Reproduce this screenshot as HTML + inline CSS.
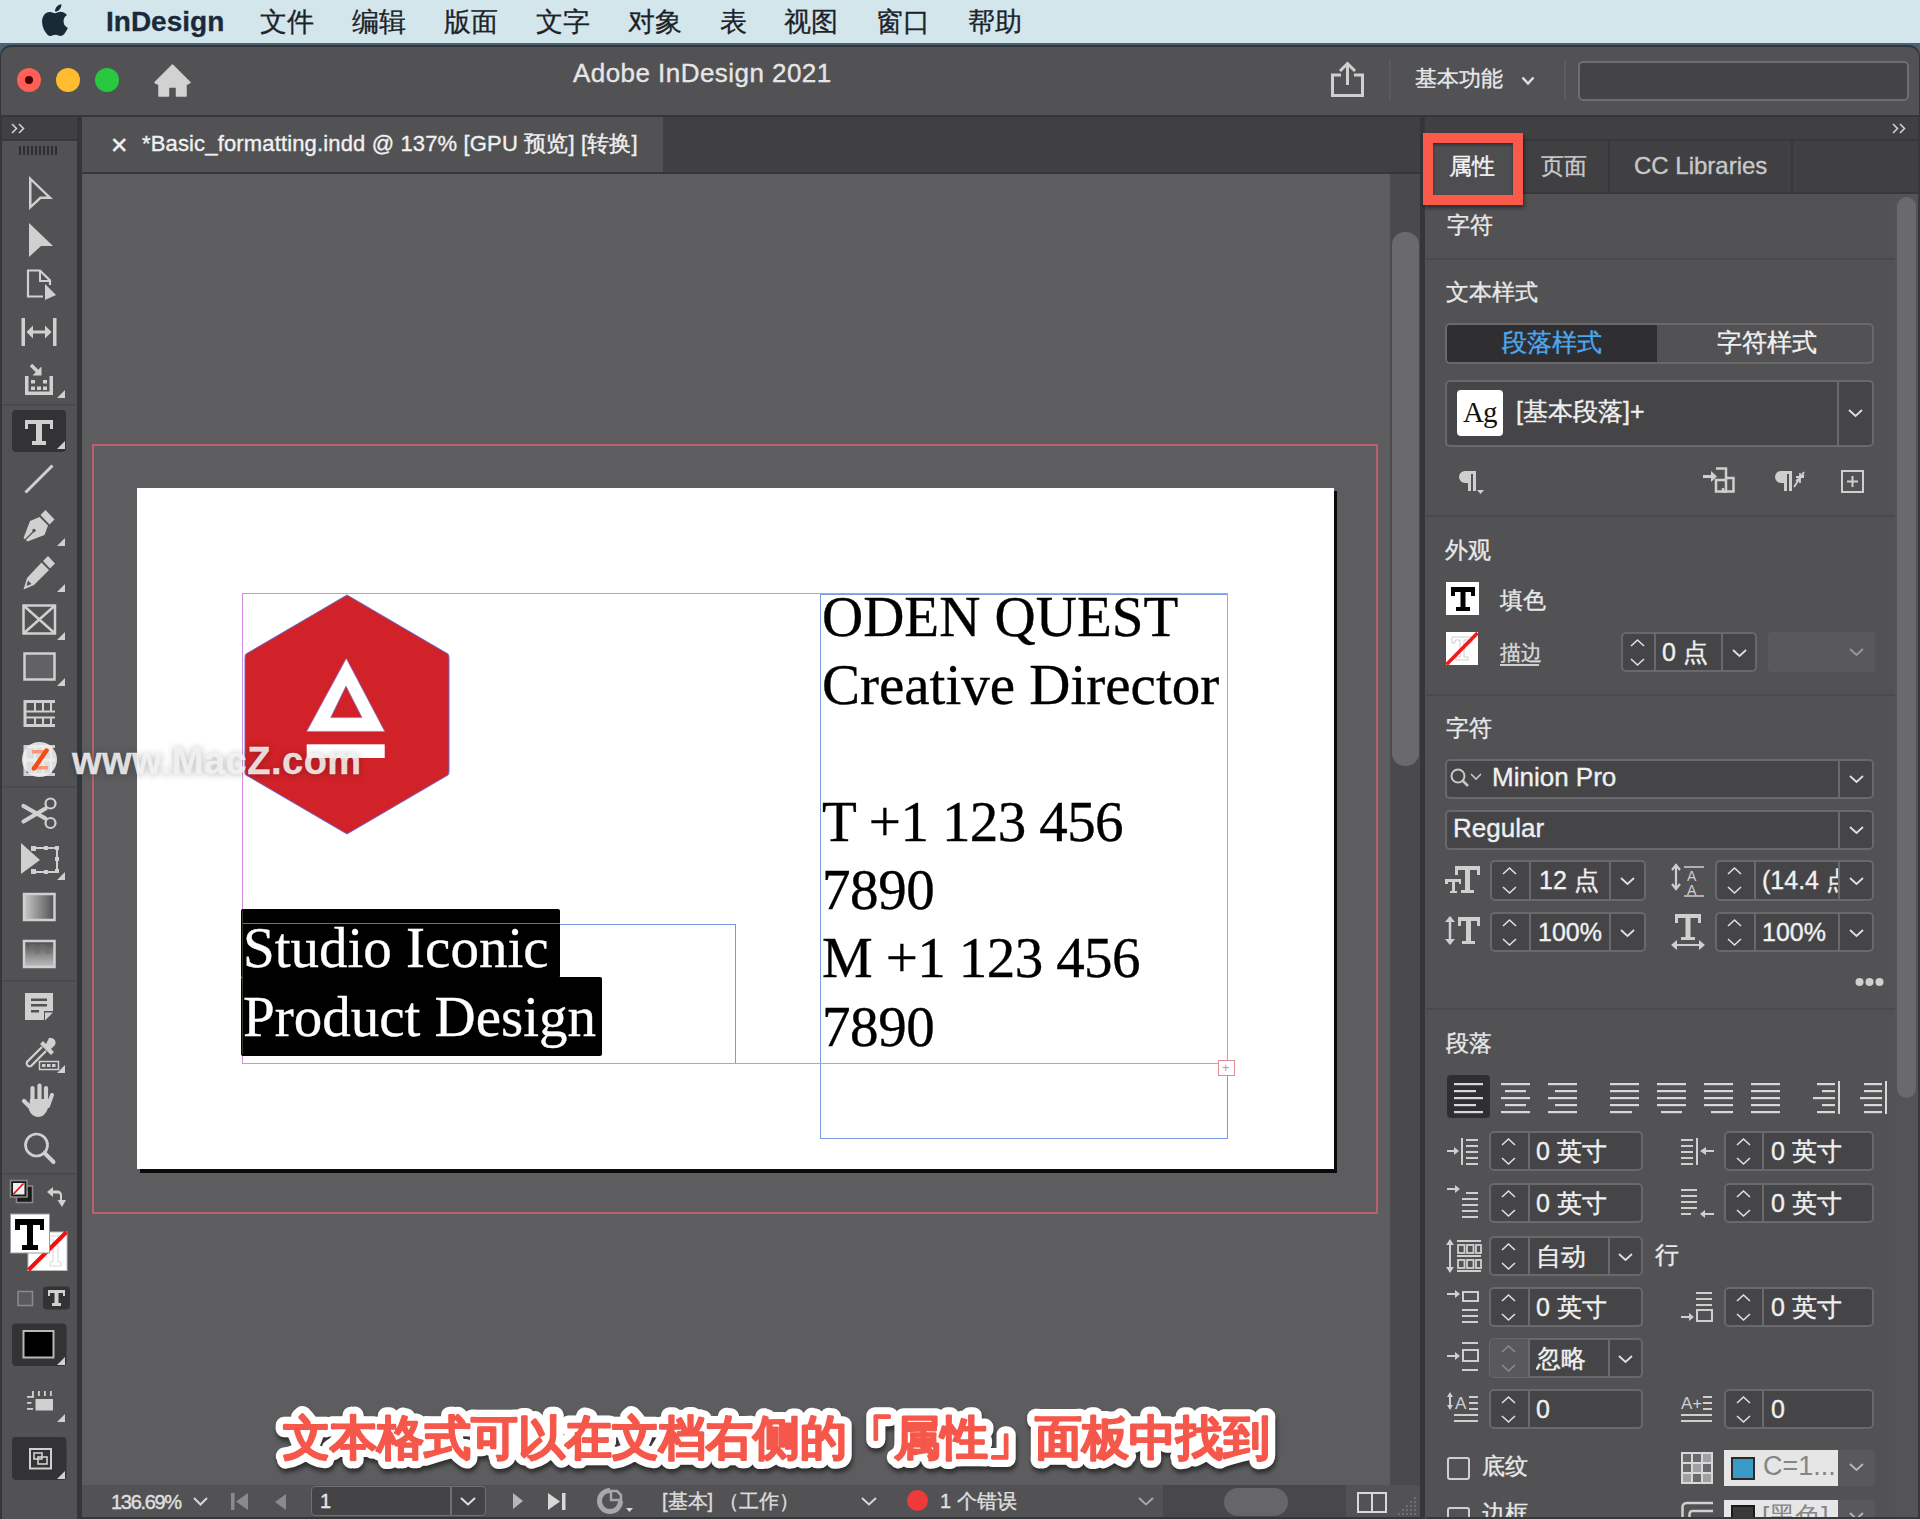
<!DOCTYPE html>
<html><head><meta charset="utf-8">
<style>
*{margin:0;padding:0;box-sizing:border-box}
html,body{width:1920px;height:1519px;overflow:hidden;background:#3a3a3c;font-family:"Liberation Sans",sans-serif;position:relative}
.a{position:absolute}
.t{position:absolute;white-space:nowrap;color:#e8e8e8;line-height:1;-webkit-text-stroke:0.35px currentColor}
svg{position:absolute;overflow:visible}
#menubar{left:0;top:0;width:1920px;height:43px;background:#d3e6ec}
.mi{position:absolute;top:5px;font-size:27px;color:#1c2328;line-height:34px;-webkit-text-stroke:0.3px currentColor}
#win{left:0;top:45px;width:1920px;height:1474px;background:#35363a;border-radius:11px 11px 0 0}
#titlebar{left:1px;top:47px;width:1918px;height:68px;background:#525254;border-radius:10px 10px 0 0}
.tl{position:absolute;width:24px;height:24px;border-radius:50%;top:68px}
</style></head>
<body>
<!-- MENU BAR -->
<div id="menubar" class="a">
  <svg style="left:39px;top:4px" width="30" height="32" viewBox="0 0 30 32"><path fill="#172a36" d="M24.6 17c0-4 3.3-5.9 3.4-6-1.9-2.7-4.8-3.1-5.800-3.100-2.500-.3-4.800 1.400-6.100 1.400-1.300 0-3.200-1.400-5.200-1.300C8.200 8 5.800 9.600 4.400 12c-2.800 4.900-.7 12.100 2 16 1.300 1.900 2.900 4.100 5 4 2-.1 2.800-1.300 5.200-1.300s3.100 1.300 5.200 1.300c2.200 0 3.500-2 4.800-3.900 1.500-2.200 2.100-4.300 2.200-4.400-.1-.1-4.200-1.600-4.200-6.300zM20.700 5.300c1.100-1.400 1.900-3.200 1.700-5.100-1.600.1-3.600 1.100-4.700 2.500-1 1.200-1.900 3.100-1.700 4.900 1.800.2 3.600-.9 4.700-2.300z"/></svg>
  <div class="mi" style="left:106px;font-weight:bold;color:#1a2a3a;font-size:28px">InDesign</div>
  <div class="mi" style="left:260px">文件</div>
  <div class="mi" style="left:352px">编辑</div>
  <div class="mi" style="left:444px">版面</div>
  <div class="mi" style="left:536px">文字</div>
  <div class="mi" style="left:628px">对象</div>
  <div class="mi" style="left:720px">表</div>
  <div class="mi" style="left:784px">视图</div>
  <div class="mi" style="left:876px">窗口</div>
  <div class="mi" style="left:968px">帮助</div>
</div>
<div class="a" style="left:0;top:43px;width:1920px;height:14px;background:#4b6274"></div>
<div id="win" class="a"></div>
<!-- TITLE BAR -->
<div id="titlebar" class="a"></div>
<div class="tl" style="left:17px;background:#fe5f57"><div class="a" style="left:8px;top:8px;width:8px;height:8px;border-radius:50%;background:#4a0002"></div></div>
<div class="tl" style="left:56px;background:#febc2e"></div>
<div class="tl" style="left:95px;background:#28c840"></div>
<svg style="left:155px;top:65px" width="35" height="32" viewBox="0 0 35 32"><path fill="#d2d2d2" d="M17.5 0 L35 17.5 L31 19.5 L31 31 L21.500 31 L21.500 22 L13.500 22 L13.500 31 L4 31 L4 19.500 L0 17.500 Z" stroke="#d2d2d2" stroke-width="1.500" stroke-linejoin="round"/></svg>
<div class="t" style="left:573px;top:60px;font-size:26px;color:#e6e6e6;letter-spacing:0.450px">Adobe InDesign 2021</div>
<svg style="left:1331px;top:62px" width="33" height="35" viewBox="0 0 33 35"><path fill="none" stroke="#d0d0d0" stroke-width="3" d="M10 13 H1.5 V33.500 H31.500 V13 H23 M16.500 23 V2 M9 9 L16.500 1.500 L24 9"/></svg>
<div class="a" style="left:1389px;top:60px;width:2px;height:40px;background:#5c5c5e"></div>
<div class="t" style="left:1415px;top:68px;font-size:22px;color:#e8e8e8">基本功能</div>
<svg style="left:1521px;top:76px" width="14" height="10" viewBox="0 0 14 10"><path fill="none" stroke="#e0e0e0" stroke-width="2.500" d="M1.500 1.500 L7 7.500 L12.500 1.500"/></svg>
<div class="a" style="left:1564px;top:60px;width:2px;height:40px;background:#5c5c5e"></div>
<div class="a" style="left:1578px;top:61px;width:331px;height:40px;background:#444446;border:2px solid #6e6e70;border-radius:5px"></div>

<!-- TOOL COLUMN -->
<div class="a" style="left:2px;top:117px;width:75px;height:22px;background:#404042"></div>
<div class="a" style="left:2px;top:141px;width:75px;height:1378px;background:#525254"></div>
<!-- TOOL ICONS -->
<svg style="left:11px;top:123px" width="14" height="11" viewBox="0 0 14 11"><path fill="none" stroke="#d0d0d0" stroke-width="1.600" d="M1 1 L5.500 5.500 L1 10 M8 1 L12.500 5.500 L8 10"/></svg>
<div class="a" style="left:2px;top:139px;width:75px;height:2px;background:#38383a"></div>
<svg style="left:19px;top:146px" width="39" height="9" viewBox="0 0 39 9"><g fill="#2e2e30"><rect x="0" y="0" width="2" height="9"/><rect x="4" y="0" width="2" height="9"/><rect x="8" y="0" width="2" height="9"/><rect x="12" y="0" width="2" height="9"/><rect x="16" y="0" width="2" height="9"/><rect x="20" y="0" width="2" height="9"/><rect x="24" y="0" width="2" height="9"/><rect x="28" y="0" width="2" height="9"/><rect x="32" y="0" width="2" height="9"/><rect x="36" y="0" width="2" height="9"/></g></svg>
<svg class="tool" style="left:0;top:160px" width="77" height="1330" viewBox="0 160 77 1330">
 <g fill="#d0d0d0" stroke="none">
  <!-- selection -->
  <path d="M29 176 L53 199 L41 199 L29 210 Z M31.500 181.500 V204.500 L40 196.500 H47 Z" fill-rule="evenodd"/>
  <!-- direct selection -->
  <path d="M29 223 L53 246 L41 246 L29 257 Z"/>
  <!-- page tool -->
  <path d="M43 296.500 H28 V270.500 H40 L50 280.500 V285" fill="none" stroke="#d0d0d0" stroke-width="2.200"/>
  <path d="M40 271 V281 H50" fill="none" stroke="#d0d0d0" stroke-width="2"/>
  <path d="M45 284 L56 295 L45 300 Z"/>
  <!-- gap tool -->
  <rect x="21.500" y="318" width="3.500" height="28"/><rect x="53" y="318" width="3.500" height="28"/>
  <path d="M26.500 332 L33 325.500 V330.500 H45 V325.500 L51.500 332 L45 338.500 V333.500 H33 V338.500 Z"/>
  <!-- content collector -->
  <path d="M25 376 H28.500 V391.500 H49.500 V376 H53 V395 H25 Z"/>
  <rect x="31" y="380" width="4" height="3.500"/><rect x="43" y="380" width="4" height="3.500"/>
  <rect x="31" y="386.500" width="4" height="3.500"/><rect x="37" y="386.500" width="4" height="3.500"/><rect x="43" y="386.500" width="4" height="3.500"/>
  <path d="M31 365 L38 372" stroke="#d0d0d0" stroke-width="3.500" fill="none"/>
  <path d="M32.500 375.500 H41.500 V366.500 Z"/>
  <path d="M57 398 L65 390 V398 Z"/>
 </g>
 <rect x="2" y="404" width="75" height="1.500" fill="#48484a"/>
 <rect x="12" y="410" width="54" height="42" rx="4" fill="#333335"/>
 <g fill="#d0d0d0">
  <!-- Type T slab -->
  <path d="M25 420 H53 V429 H50 V424 H42 V441 H46 V445 H32 V441 H36 V424 H28 V429 H25 Z"/>
  <path d="M57 449 L65 441 V449 Z"/>
  <!-- line -->
  <path d="M25.500 492.500 L52.500 465.500" stroke="#d0d0d0" stroke-width="3" fill="none"/>
  <!-- pen -->
  <path d="M40.500 515 L45.500 510 L54.500 519.500 L49.500 524.500 Z"/>
  <path d="M39.500 517 L48 525.500 L44.500 535 L27.500 541.500 L23.500 538 L30 521 Z"/>
  <path d="M25 540 L34 531" stroke="#525254" stroke-width="1.300"/>
  <circle cx="34" cy="530.500" r="1.700" fill="#525254"/>
  <path d="M57 546 L65 538 V546 Z"/>
  <!-- pencil -->
  <path d="M43 561 L48 556 L55 563.500 L50 568.500 Z"/>
  <path d="M41.500 562.500 L49 570 L34 585 L23.500 589.500 L27 578 Z M26.500 586 L28 580.500 L31.500 584 Z" fill-rule="evenodd"/>
  <path d="M57 592 L65 584 V592 Z"/>
  <!-- rect frame -->
  <path d="M23.500 605.500 H55 V633.500 H23.500 Z M23.500 605.500 L55 633.500 M55 605.500 L23.500 633.500" fill="none" stroke="#d0d0d0" stroke-width="2.500"/>
  <path d="M57 640 L65 632 V640 Z"/>
  <!-- rect -->
  <rect x="24.500" y="653.500" width="30" height="26" fill="#626264" stroke="#d0d0d0" stroke-width="2.500"/>
  <path d="M57 686 L65 678 V686 Z"/>
  <!-- table -->
  <path d="M25 700 V727 M23.500 701.500 H55 M23.500 725.500 H55" fill="none" stroke="#d0d0d0" stroke-width="3"/>
  <path d="M26 711.500 H55 M26 717.500 H55" fill="none" stroke="#d0d0d0" stroke-width="1.800"/>
  <path d="M35 703 V711 M43 703 V711 M51 703 V711 M35 718 V725 M43 718 V725 M51 718 V725" fill="none" stroke="#d0d0d0" stroke-width="2"/>
  <path d="M25 745 V776 M23.500 746.500 H55 M23.500 774.500 H55 M26 760 H55" fill="none" stroke="#d0d0d0" stroke-width="3"/>
  <path d="M35 748 V774 M43 748 V774 M51 748 V774" fill="none" stroke="#d0d0d0" stroke-width="2"/>
 </g>
 <rect x="2" y="786" width="75" height="1.500" fill="#48484a"/>
 <g fill="#d0d0d0">
  <!-- scissors -->
  <circle cx="50.500" cy="803.500" r="5" fill="none" stroke="#d0d0d0" stroke-width="2.200"/>
  <circle cx="50.500" cy="823" r="5" fill="none" stroke="#d0d0d0" stroke-width="2.200"/>
  <path d="M23.500 806 L45.500 818.500 M23.500 821.500 L45.500 808.500" stroke="#d0d0d0" stroke-width="4.300" stroke-linecap="round" fill="none"/>
  <!-- free transform -->
  <path d="M21 843 L40 860 L21 874 Z"/>
  <path d="M33 848 H57 V872 H33" fill="none" stroke="#d0d0d0" stroke-width="2"/>
  <rect x="31" y="846" width="5" height="5"/><rect x="44" y="846" width="4" height="4"/><rect x="55" y="846" width="4" height="4"/>
  <rect x="55" y="857" width="4" height="4"/><rect x="55" y="869" width="4" height="4"/><rect x="44" y="870" width="4" height="4"/><rect x="31" y="869" width="5" height="5"/>
  <path d="M57 880 L65 872 V880 Z"/>
 </g>
 <defs>
  <linearGradient id="gr1" x1="0" x2="1"><stop offset="0" stop-color="#c8c8c8"/><stop offset="1" stop-color="#505052"/></linearGradient>
  <linearGradient id="gr2" x1="0" y1="0" x2="0" y2="1"><stop offset="0" stop-color="#4c4c4e"/><stop offset="1" stop-color="#c0c0c0"/></linearGradient>
 </defs>
 <rect x="24" y="894" width="30.500" height="26" fill="url(#gr1)" stroke="#d0d0d0" stroke-width="2.500"/>
 <rect x="24" y="941" width="30.500" height="26" fill="url(#gr2)" stroke="#d0d0d0" stroke-width="2.500"/>
 <g fill="#6e6e70" opacity="0.6"><rect x="30" y="944" width="5" height="5"/><rect x="40" y="944" width="5" height="5"/><rect x="35" y="949" width="5" height="5"/><rect x="45" y="949" width="5" height="5"/></g>
 <rect x="2" y="980" width="75" height="1.500" fill="#48484a"/>
 <g fill="#d0d0d0">
  <!-- note -->
  <path d="M25 993 H53 V1011 H44 V1020 H25 Z"/>
  <path d="M45 1012.500 H53 L45 1020.500 Z"/>
  <rect x="31" y="998.500" width="16" height="2.500" fill="#525254"/><rect x="31" y="1004" width="16" height="2.500" fill="#525254"/><rect x="31" y="1010" width="8" height="2.500" fill="#525254"/>
  <!-- eyedropper -->
  <path d="M49 1038 a5 5 0 0 1 6 7 L51 1049 L54 1052 L51 1055 L40 1044 L43 1041 L46 1044 Z"/>
  <path d="M42 1047 L27 1062 a3 3 0 0 0 4 4 L46 1051" fill="none" stroke="#d0d0d0" stroke-width="2.200"/>
  <rect x="39.500" y="1061.500" width="19" height="8" fill="none" stroke="#d0d0d0" stroke-width="1.500"/>
  <rect x="42" y="1064" width="3.500" height="3"/><rect x="47" y="1064" width="3.500" height="3"/><rect x="52" y="1064" width="3.500" height="3"/>
  <path d="M57 1073 L65 1065 V1073 Z"/>
  <!-- hand -->
  <g stroke="#d0d0d0" stroke-linecap="round" fill="none">
   <path d="M32.500 1088 V1103" stroke-width="4.200"/>
   <path d="M39.500 1085.500 V1102" stroke-width="4.200"/>
   <path d="M46 1088 V1103" stroke-width="4.200"/>
   <path d="M52 1095 L48 1106" stroke-width="4"/>
   <path d="M24 1101 L31 1108" stroke-width="4.200"/>
  </g>
  <path d="M30 1099 H50 L48 1108 Q45 1117 38 1117 Q32 1117 29 1110 Z"/>
  <!-- zoom -->
  <circle cx="36.500" cy="1145" r="11" fill="none" stroke="#d0d0d0" stroke-width="2.700"/>
  <path d="M44.500 1153 L53.500 1162" stroke="#d0d0d0" stroke-width="4" stroke-linecap="round"/>
 </g>
 <rect x="2" y="1173" width="75" height="1.500" fill="#48484a"/>
 <!-- small fill/stroke -->
 <rect x="16.500" y="1186" width="16" height="16.500" fill="#1a1a1a" stroke="#8a8a8c" stroke-width="1.500"/>
 <path d="M22 1196 H27 V1191" fill="none" stroke="#dcdcdc" stroke-width="1.200"/>
 <rect x="10.500" y="1180.500" width="16.500" height="16.500" fill="#1a1a1a" stroke="#8a8a8c" stroke-width="1.500"/>
 <rect x="13" y="1183" width="11.500" height="11.500" fill="#eeeeee"/>
 <path d="M13.500 1194 L23.500 1183.500" stroke="#ee1111" stroke-width="1.800"/>
 <path d="M47 1192 L53 1187 V1190.500 H57.500 a4.500 4.500 0 0 1 4.500 4.500 V1200 H66 L62 1207 L57.500 1200 H60 V1195.500 a2 2 0 0 0 -2 -2 H53 V1197 Z" fill="#d0d0d0"/>
 <!-- big stroke box -->
 <rect x="28" y="1232" width="39" height="38.500" fill="#ffffff" stroke="#bbbbbb" stroke-width="1"/>
 <path d="M46 1236 H62 V1240 H58 V1262 H61 V1266 H50 V1262 H53 V1240 H46" fill="none" stroke="#d8d8d8" stroke-width="1"/>
 <path d="M28.500 1270 L66.500 1232" stroke="#ee1111" stroke-width="4"/>
 <!-- big fill T -->
 <rect x="10.500" y="1214" width="39" height="39" fill="#ffffff" stroke="#9a9a9a" stroke-width="1"/>
 <path d="M15 1219 H44 V1230 H40 V1225 H33 V1245 H38 V1250 H22 V1245 H27 V1225 H20 V1230 H15 Z" fill="#000"/>
 <!-- container/text -->
 <rect x="18" y="1291.500" width="14.500" height="14" fill="#5a5a5c" stroke="#8a8a8c" stroke-width="1.500"/>
 <rect x="43" y="1286.500" width="27" height="23" rx="4" fill="#333335"/>
 <path d="M48 1290 H65 V1296 H63 V1293 H58.500 V1303 H61 V1306 H52 V1303 H54.500 V1293 H50 V1296 H48 Z" fill="#d0d0d0"/>
 <!-- black square button -->
 <rect x="12" y="1323.500" width="54.500" height="42.500" rx="4" fill="#333335"/>
 <rect x="23.500" y="1331" width="30" height="26.500" fill="#000" stroke="#b8b8b8" stroke-width="2"/>
 <path d="M57 1365 L65 1357 V1365 Z" fill="#d0d0d0"/>
 <!-- screen mode -->
 <g fill="#d0d0d0">
  <rect x="35.500" y="1399" width="17.500" height="11.500"/>
  <rect x="38" y="1391" width="1.800" height="5"/><rect x="44" y="1391" width="1.800" height="5"/><rect x="50" y="1391" width="1.800" height="5"/>
  <rect x="27" y="1396" width="7" height="1.800"/><rect x="32" y="1391" width="1.800" height="6.500"/>
  <rect x="27" y="1402" width="4.500" height="1.800"/><rect x="27" y="1408" width="6" height="1.800"/>
  <path d="M57 1422 L65 1414 V1422 Z"/>
 </g>
 <!-- last button -->
 <rect x="12" y="1437" width="54.500" height="43" rx="4" fill="#333335"/>
 <rect x="30" y="1449" width="21" height="19.500" fill="none" stroke="#d0d0d0" stroke-width="2"/>
 <rect x="34" y="1453" width="8" height="6" fill="none" stroke="#d0d0d0" stroke-width="1.600"/>
 <rect x="38" y="1457" width="9" height="7" fill="none" stroke="#d0d0d0" stroke-width="1.600"/>
 <path d="M57 1479 L65 1471 V1479 Z" fill="#d0d0d0"/>
</svg>
<!-- TAB BAR -->
<div class="a" style="left:82px;top:117px;width:1338px;height:55px;background:#404042"></div>
<div class="a" style="left:82px;top:117px;width:581px;height:55px;background:#525254"></div>
<div class="t" style="left:110px;top:135px;font-size:22px;color:#f0f0f0">✕</div>
<div class="t" style="left:142px;top:133px;font-size:22px;color:#f0f0f0;letter-spacing:0.150px">*Basic_formatting.indd @ 137% [GPU 预览] [转换]</div>
<!-- CANVAS -->
<div id="canvas" class="a" style="left:82px;top:174px;width:1308px;height:1311px;background:#5d5d5f;overflow:hidden"></div>
<div class="a" style="left:1390px;top:174px;width:30px;height:1311px;background:#4a4a4c"></div>
<div class="a" style="left:1392px;top:232px;width:27px;height:534px;background:#6a6a6c;border-radius:13px"></div>
<!-- CANVAS CONTENT -->
<div class="a" style="left:92px;top:444px;width:1286px;height:770px;border:2px solid #b8606e"></div>
<div class="a" style="left:140px;top:491px;width:1197px;height:682px;background:#0a0a0a"></div>
<div class="a" style="left:137px;top:488px;width:1197px;height:681px;background:#ffffff"></div>
<!-- right text frame -->
<div class="a" style="left:820px;top:594px;width:408px;height:545px;border:1px solid #7a9ce0"></div>
<!-- left frame -->
<div class="a" style="left:242px;top:924px;width:494px;height:140px;border:1px solid #7a9ce0"></div>
<!-- margin guides -->
<div class="a" style="left:242px;top:593px;width:986px;height:471px;border:1.500px solid #d48ce0"></div>
<div class="a" style="left:241px;top:909px;width:319px;height:69px;background:#000;border-radius:2px"></div>
<div class="a" style="left:241px;top:977px;width:361px;height:79px;background:#000;border-radius:2px"></div>
<div class="a" style="left:242px;top:923px;width:318px;height:1px;background:#8a6a40"></div>
<div class="a" style="left:242px;top:911px;width:1px;height:143px;background:#3a3a20"></div>
<div class="a" style="left:1218px;top:1060px;width:17px;height:16px;border:1px solid #e08a9a;background:#fff"></div>
<div class="t" style="left:1222px;top:1061px;font-size:13px;color:#e08a9a;-webkit-text-stroke:0">+</div>
<!-- hexagon logo -->
<svg style="left:244px;top:594px" width="206" height="241" viewBox="0 0 206 241">
 <path d="M103 1 L204 60 Q205 61 205 64 L205 177 Q205 180 204 181 L103 240 L2 181 Q1 180 1 177 L1 64 Q1 61 2 60 Z" fill="#d02228" stroke="#6a6ad0" stroke-width="1"/>
 <path d="M102.300 64.500 L140.700 137.400 L62.700 137.400 Z M102 92 L86.700 123.600 L118 123.600 Z" fill="#fff" fill-rule="evenodd" stroke="#8080e0" stroke-width="0.700"/>
 <rect x="62.700" y="150.300" width="78" height="13.700" fill="#fff"/>
</svg>
<!-- text -->
<div class="t" id="oden" style="left:822px;top:583px;font-family:'Liberation Serif',serif;font-size:57px;color:#000;line-height:68.3px">ODEN QUEST<br>Creative Director<br><br><span style="letter-spacing:-0.600px">T +1 123 456</span><br><span style="letter-spacing:-0.400px">7890</span><br><span style="letter-spacing:-0.600px">M +1 123 456</span><br><span style="letter-spacing:-0.400px">7890</span></div>
<div class="t" id="studio" style="left:243px;top:913px;font-family:'Liberation Serif',serif;font-size:57px;color:#fff;line-height:69px">Studio Iconic<br>Product Design</div>
<!-- STATUS BAR -->
<div id="status" class="a" style="left:82px;top:1485px;width:1338px;height:32px;background:#525254"></div>
<!-- STATUS CONTENT -->
<div class="t" style="left:111px;top:1492px;font-size:20px;color:#e0e0e0;letter-spacing:-1.300px">136.69%</div>
<svg style="left:193px;top:1497px" width="15" height="9" viewBox="0 0 15 9"><path d="M1 1 L7.500 7.500 L14 1" fill="none" stroke="#d8d8d8" stroke-width="2"/></svg>
<svg style="left:231px;top:1493px" width="18" height="17" viewBox="0 0 18 17"><rect x="0" y="0" width="3.500" height="17" fill="#8a8a8c"/><path d="M17 0 V17 L5 8.500 Z" fill="#8a8a8c"/></svg>
<svg style="left:275px;top:1494px" width="11" height="16" viewBox="0 0 11 16"><path d="M11 0 V16 L0 8 Z" fill="#8a8a8c"/></svg>
<div class="a" style="left:311px;top:1486px;width:175px;height:30px;background:#444446;border:1.500px solid #707072;border-radius:4px"></div>
<div class="a" style="left:450px;top:1487px;width:1.500px;height:28px;background:#707072"></div>
<div class="t" style="left:320px;top:1491px;font-size:20px;color:#e8e8e8">1</div>
<svg style="left:460px;top:1497px" width="16" height="9" viewBox="0 0 16 9"><path d="M1 1 L8 7.500 L15 1" fill="none" stroke="#e0e0e0" stroke-width="2"/></svg>
<svg style="left:513px;top:1493px" width="10" height="16" viewBox="0 0 10 16"><path d="M0 0 V16 L10 8 Z" fill="#b8b8b8"/></svg>
<svg style="left:548px;top:1493px" width="18" height="17" viewBox="0 0 18 17"><path d="M0 0 V17 L12 8.500 Z" fill="#d8d8d8"/><rect x="14" y="0" width="3.500" height="17" fill="#d8d8d8"/></svg>
<svg style="left:598px;top:1489px" width="36" height="25" viewBox="0 0 36 25"><path d="M12 1.500 a10.500 10.500 0 1 0 10.500 10.500" fill="none" stroke="#a8a8aa" stroke-width="5"/><path d="M13 2 H19 L23 6 V11 H13 Z" fill="none" stroke="#a8a8aa" stroke-width="2.500"/><path d="M28 19 H35 L31.500 23 Z" fill="#d8d8d8"/></svg>
<div class="t" style="left:662px;top:1491px;font-size:20px;color:#dcdcdc">[基本]  （工作）</div>
<svg style="left:861px;top:1497px" width="16" height="9" viewBox="0 0 16 9"><path d="M1 1 L8 7.500 L15 1" fill="none" stroke="#d8d8d8" stroke-width="2"/></svg>
<div class="a" style="left:907px;top:1490px;width:21px;height:21px;border-radius:50%;background:#ee3a3a"></div>
<div class="t" style="left:940px;top:1491px;font-size:20px;color:#e0e0e0">1 个错误</div>
<svg style="left:1138px;top:1497px" width="16" height="9" viewBox="0 0 16 9"><path d="M1 1 L8 7.500 L15 1" fill="none" stroke="#a8a8a8" stroke-width="2"/></svg>
<div class="a" style="left:1163px;top:1485px;width:183px;height:32px;background:#48484a"></div>
<div class="a" style="left:1224px;top:1488px;width:64px;height:28px;background:#666668;border-radius:14px"></div>
<svg style="left:1357px;top:1492px" width="30" height="21" viewBox="0 0 30 21"><path d="M1 1 H29 V20 H1 Z M15 1 V20" fill="none" stroke="#d8d8d8" stroke-width="2"/></svg>
<svg style="left:1398px;top:1495px" width="20" height="20" viewBox="0 0 20 20"><g fill="#7a7a7c"><circle cx="17" cy="3" r="1"/><circle cx="17" cy="7" r="1"/><circle cx="13" cy="7" r="1"/><circle cx="17" cy="11" r="1"/><circle cx="13" cy="11" r="1"/><circle cx="9" cy="11" r="1"/><circle cx="17" cy="15" r="1"/><circle cx="13" cy="15" r="1"/><circle cx="9" cy="15" r="1"/><circle cx="5" cy="15" r="1"/><circle cx="17" cy="19" r="1"/><circle cx="13" cy="19" r="1"/><circle cx="9" cy="19" r="1"/><circle cx="5" cy="19" r="1"/><circle cx="1" cy="19" r="1"/></g></svg>
<!-- watermark -->
<div class="a" style="left:22px;top:742px;width:35px;height:35px;border-radius:50%;background:rgba(240,240,240,0.88)"></div>
<svg style="left:31px;top:749px" width="18" height="21" viewBox="0 0 18 21"><rect x="1" y="1" width="15" height="3.500" fill="#f59a78"/><rect x="1" y="17" width="16" height="3.500" fill="#f59a78"/><path d="M15.500 1.500 L3 19.500" stroke="#f24d18" stroke-width="4.500" stroke-linecap="round"/></svg>
<div class="t" style="left:72px;top:742px;font-size:38px;font-weight:bold;color:rgba(244,244,244,0.88);text-shadow:0 1px 7px rgba(0,0,0,0.3);letter-spacing:0.500px">www.MacZ.com</div>
<!-- caption -->
<svg style="left:250px;top:1390px;filter:drop-shadow(1px 4px 2px rgba(0,0,0,0.5))" width="1060" height="100" viewBox="0 0 1060 100"><text x="33" y="64" font-family="Liberation Sans, sans-serif" font-size="47" font-weight="bold" fill="#ffffff" stroke="#ffffff" stroke-width="16" stroke-linejoin="round">文本格式可以在文档右侧的「属性」面板中找到</text><text x="33" y="64" font-family="Liberation Sans, sans-serif" font-size="47" font-weight="bold" fill="#f5574a" stroke="#f5574a" stroke-width="1.600" stroke-linejoin="round">文本格式可以在文档右侧的「属性」面板中找到</text></svg>
<!-- PANEL -->
<div class="a" style="left:1424px;top:117px;width:1px;height:1402px;background:#38383a"></div>
<div class="a" style="left:1425px;top:117px;width:493px;height:22px;background:#404042"></div>
<div class="a" style="left:1425px;top:139px;width:493px;height:2px;background:#38383a"></div>
<div class="a" style="left:1425px;top:141px;width:493px;height:52px;background:#404042"></div>
<div class="a" style="left:1425px;top:192px;width:493px;height:2px;background:#38383a"></div>
<div class="a" style="left:1918px;top:117px;width:2px;height:1402px;background:#38383a"></div>
<div class="a" style="left:1425px;top:194px;width:493px;height:1325px;background:#525254"></div>
<svg style="left:1892px;top:123px" width="14" height="11" viewBox="0 0 14 11"><path fill="none" stroke="#d0d0d0" stroke-width="1.600" d="M1 1 L5.500 5.500 L1 10 M8 1 L12.500 5.500 L8 10"/></svg>
<div class="a" style="left:1425px;top:141px;width:97px;height:54px;background:#4e4e50"></div>
<div class="a" style="left:1522px;top:141px;width:2px;height:51px;background:#38383a"></div>
<div class="a" style="left:1608px;top:141px;width:2px;height:51px;background:#38383a"></div>
<div class="a" style="left:1791px;top:141px;width:2px;height:51px;background:#38383a"></div>
<div class="t" style="left:1449px;top:155px;font-size:23px;color:#f4f4f4;">属性</div>
<div class="t" style="left:1541px;top:155px;font-size:23px;color:#c8c8c8;">页面</div>
<div class="t" style="left:1634px;top:154px;font-size:24px;color:#c8c8c8;">CC Libraries</div>
<div class="a" style="left:1423px;top:133px;width:100px;height:72px;border:10px solid #f95a4a;box-shadow:1px 3px 4px rgba(0,0,0,0.45), inset 0 2px 3px rgba(0,0,0,0.4)"></div>
<div class="a" style="left:1895px;top:194px;width:23px;height:1325px;background:#545456"></div>
<div class="a" style="left:1897px;top:197px;width:19px;height:901px;background:#6a6a6c;border-radius:10px"></div>
<div class="t" style="left:1447px;top:214px;font-size:23px;color:#e8e8e8;">字符</div>
<div class="a" style="left:1426px;top:258px;width:469px;height:2px;background:#4a4a4c"></div>
<div class="t" style="left:1446px;top:281px;font-size:23px;color:#e8e8e8;">文本样式</div>
<div class="a" style="left:1445px;top:323px;width:429px;height:41px;background:#525254;border:2px solid #69696b;border-radius:5px"></div>
<div class="a" style="left:1447px;top:325px;width:210px;height:37px;background:#2f2f31;border-radius:3px 0 0 3px"></div>
<div class="t" style="left:1502px;top:330px;font-size:25px;color:#4da6ec;">段落样式</div>
<div class="t" style="left:1717px;top:330px;font-size:25px;color:#f0f0f0;">字符样式</div>
<div class="a" style="left:1445px;top:380px;width:429px;height:67px;background:#454547;border:2px solid #69696b;border-radius:5px"></div>
<div class="a" style="left:1837px;top:381px;width:2px;height:65px;background:#69696b"></div>
<div class="a" style="left:1457px;top:390px;width:46px;height:46px;background:#fff;border-radius:4px"></div>
<div class="t" style="left:1463px;top:398px;font-size:29px;color:#111;font-family:'Liberation Serif',serif;letter-spacing:-1px;-webkit-text-stroke:0">Ag</div>
<div class="t" style="left:1516px;top:399px;font-size:25px;color:#f0f0f0;">[基本段落]+</div>
<svg style="left:1848px;top:409px" width="15" height="8" viewBox="0 0 15 8"><path d="M1 1 L7.5 7 L14 1" fill="none" stroke="#e0e0e0" stroke-width="1.8"/></svg>
<svg style="left:1456px;top:468px" width="32" height="27" viewBox="0 0 32 27"><path d="M9 3 H20 V23 H17 V6 H15 V23 H12 V15 H9 a6 6 0 0 1 0 -12 Z" fill="#cfcfcf"/><path d="M21 22 H28 L24.500 26 Z" fill="#cfcfcf"/></svg>
<svg style="left:1702px;top:466px" width="34" height="28" viewBox="0 0 34 28"><path d="M14 2.500 H24 V12 H31.500 V25.500 H21 V22" fill="none" stroke="#cfcfcf" stroke-width="2.500"/><path d="M14 14 H24 V25.500 H14 Z" fill="none" stroke="#cfcfcf" stroke-width="2.500"/><path d="M1 9 H9 V5 L15 10.500 L9 16 V12 H1 Z" fill="#cfcfcf"/></svg>
<svg style="left:1772px;top:468px" width="34" height="26" viewBox="0 0 34 26"><path d="M9 3 H20 V23 H17 V6 H15 V23 H12 V15 H9 a6 6 0 0 1 0 -12 Z" fill="#cfcfcf"/><path d="M22 19 L32 4 M24 9 H32 M28 5 V15 M24 13 L32 7" stroke="#cfcfcf" stroke-width="1.800"/></svg>
<svg style="left:1841px;top:470px" width="23" height="23" viewBox="0 0 23 23"><rect x="1" y="1" width="21" height="21" fill="none" stroke="#cfcfcf" stroke-width="2"/><path d="M11.500 6 V17 M6 11.500 H17" stroke="#cfcfcf" stroke-width="2"/></svg>
<div class="a" style="left:1426px;top:515px;width:469px;height:2px;background:#4a4a4c"></div>
<div class="t" style="left:1445px;top:539px;font-size:23px;color:#e8e8e8;">外观</div>
<div class="a" style="left:1446px;top:582px;width:33px;height:33px;background:#fff"></div>
<svg style="left:1449px;top:585px" width="28" height="28" viewBox="0 0 28 28"><path d="M2 2 H26 V11 H22 V7 H16.500 V22 H21 V26 H7 V22 H11.500 V7 H6 V11 H2 Z" fill="#000"/></svg>
<div class="t" style="left:1500px;top:589px;font-size:23px;color:#e8e8e8;">填色</div>
<div class="a" style="left:1446px;top:632px;width:32px;height:33px;background:#fff"></div>
<svg style="left:1446px;top:632px" width="32" height="33" viewBox="0 0 32 33"><path d="M6 5 H26 V11 H23 V8 H18 V25 H22 V28 H10 V25 H14 V8 H9 V11 H6 Z" fill="none" stroke="#cfcfcf" stroke-width="1"/><path d="M0.500 32.500 L31.500 1" stroke="#ee1a1a" stroke-width="3.500"/></svg>
<div class="t" style="left:1500px;top:642px;font-size:21px;color:#d8d8d8;">描边</div>
<div class="a" style="left:1500px;top:664px;width:39px;height:2px;background:#d0d0d0"></div>
<div class="a" style="left:1621px;top:632px;width:136px;height:40px;background:#454547;border:2px solid #69696b;border-radius:5px"></div><div class="a" style="left:1654px;top:632px;width:2px;height:40px;background:#69696b"></div><div class="a" style="left:1721px;top:632px;width:2px;height:40px;background:#69696b"></div><svg style="left:1630px;top:639px" width="15" height="8" viewBox="0 0 15 8"><path d="M1 7 L7.5 1 L14 7" fill="none" stroke="#e0e0e0" stroke-width="1.600"/></svg><svg style="left:1630px;top:658px" width="15" height="8" viewBox="0 0 15 8"><path d="M1 1 L7.5 7 L14 1" fill="none" stroke="#e0e0e0" stroke-width="1.6"/></svg><div class="a" style="left:1662px;top:634px;width:59px;height:36px;overflow:hidden"><div class="t" style="left:0;top:6px;font-size:25px;color:#f0f0f0">0 点</div></div><svg style="left:1732px;top:649px" width="15" height="8" viewBox="0 0 15 8"><path d="M1 1 L7.5 7 L14 1" fill="none" stroke="#e0e0e0" stroke-width="1.8"/></svg>
<div class="a" style="left:1768px;top:632px;width:107px;height:40px;background:#59595b;border-radius:4px"></div>
<svg style="left:1849px;top:648px" width="15" height="8" viewBox="0 0 15 8"><path d="M1 1 L7.5 7 L14 1" fill="none" stroke="#9a9a9a" stroke-width="1.8"/></svg>
<div class="a" style="left:1426px;top:694px;width:469px;height:2px;background:#4a4a4c"></div>
<div class="t" style="left:1446px;top:717px;font-size:23px;color:#e8e8e8;">字符</div>
<div class="a" style="left:1445px;top:759px;width:429px;height:40px;background:#454547;border:2px solid #69696b;border-radius:5px"></div>
<div class="a" style="left:1838px;top:760px;width:2px;height:38px;background:#69696b"></div>
<svg style="left:1449px;top:766px" width="38" height="24" viewBox="0 0 38 24"><circle cx="9" cy="10" r="6.500" fill="none" stroke="#c8c8c8" stroke-width="2"/><path d="M13.500 14.500 L19 20" stroke="#c8c8c8" stroke-width="2.500"/><path d="M22 8 L27 13 L32 8" fill="none" stroke="#c8c8c8" stroke-width="1.600"/></svg>
<div class="t" style="left:1492px;top:764px;font-size:26px;color:#f0f0f0;">Minion Pro</div>
<svg style="left:1849px;top:775px" width="15" height="8" viewBox="0 0 15 8"><path d="M1 1 L7.5 7 L14 1" fill="none" stroke="#e0e0e0" stroke-width="1.8"/></svg>
<div class="a" style="left:1445px;top:810px;width:429px;height:40px;background:#454547;border:2px solid #69696b;border-radius:5px"></div>
<div class="a" style="left:1838px;top:811px;width:2px;height:38px;background:#69696b"></div>
<div class="t" style="left:1453px;top:815px;font-size:26px;color:#f0f0f0;">Regular</div>
<svg style="left:1849px;top:826px" width="15" height="8" viewBox="0 0 15 8"><path d="M1 1 L7.5 7 L14 1" fill="none" stroke="#e0e0e0" stroke-width="1.8"/></svg>
<div class="a" style="left:1490px;top:860px;width:156px;height:41px;background:#454547;border:2px solid #69696b;border-radius:5px"></div><div class="a" style="left:1529px;top:860px;width:2px;height:41px;background:#69696b"></div><div class="a" style="left:1609px;top:860px;width:2px;height:41px;background:#69696b"></div><svg style="left:1502px;top:867px" width="15" height="8" viewBox="0 0 15 8"><path d="M1 7 L7.5 1 L14 7" fill="none" stroke="#e0e0e0" stroke-width="1.600"/></svg><svg style="left:1502px;top:886px" width="15" height="8" viewBox="0 0 15 8"><path d="M1 1 L7.5 7 L14 1" fill="none" stroke="#e0e0e0" stroke-width="1.6"/></svg><div class="a" style="left:1539px;top:862px;width:70px;height:37px;overflow:hidden"><div class="t" style="left:0;top:6px;font-size:25px;color:#f0f0f0">12 点</div></div><svg style="left:1620px;top:877px" width="15" height="8" viewBox="0 0 15 8"><path d="M1 1 L7.5 7 L14 1" fill="none" stroke="#e0e0e0" stroke-width="1.8"/></svg>
<div class="a" style="left:1715px;top:860px;width:159px;height:41px;background:#454547;border:2px solid #69696b;border-radius:5px"></div><div class="a" style="left:1754px;top:860px;width:2px;height:41px;background:#69696b"></div><div class="a" style="left:1838px;top:860px;width:2px;height:41px;background:#69696b"></div><svg style="left:1727px;top:867px" width="15" height="8" viewBox="0 0 15 8"><path d="M1 7 L7.5 1 L14 7" fill="none" stroke="#e0e0e0" stroke-width="1.600"/></svg><svg style="left:1727px;top:886px" width="15" height="8" viewBox="0 0 15 8"><path d="M1 1 L7.5 7 L14 1" fill="none" stroke="#e0e0e0" stroke-width="1.6"/></svg><div class="a" style="left:1762px;top:862px;width:76px;height:37px;overflow:hidden"><div class="t" style="left:0;top:6px;font-size:25px;color:#f0f0f0">(14.4 点</div></div><svg style="left:1849px;top:877px" width="15" height="8" viewBox="0 0 15 8"><path d="M1 1 L7.5 7 L14 1" fill="none" stroke="#e0e0e0" stroke-width="1.8"/></svg>
<div class="a" style="left:1490px;top:912px;width:156px;height:40px;background:#454547;border:2px solid #69696b;border-radius:5px"></div><div class="a" style="left:1529px;top:912px;width:2px;height:40px;background:#69696b"></div><div class="a" style="left:1609px;top:912px;width:2px;height:40px;background:#69696b"></div><svg style="left:1502px;top:919px" width="15" height="8" viewBox="0 0 15 8"><path d="M1 7 L7.5 1 L14 7" fill="none" stroke="#e0e0e0" stroke-width="1.600"/></svg><svg style="left:1502px;top:938px" width="15" height="8" viewBox="0 0 15 8"><path d="M1 1 L7.5 7 L14 1" fill="none" stroke="#e0e0e0" stroke-width="1.6"/></svg><div class="a" style="left:1538px;top:914px;width:71px;height:36px;overflow:hidden"><div class="t" style="left:0;top:6px;font-size:25px;color:#f0f0f0">100%</div></div><svg style="left:1620px;top:929px" width="15" height="8" viewBox="0 0 15 8"><path d="M1 1 L7.5 7 L14 1" fill="none" stroke="#e0e0e0" stroke-width="1.8"/></svg>
<div class="a" style="left:1715px;top:912px;width:159px;height:40px;background:#454547;border:2px solid #69696b;border-radius:5px"></div><div class="a" style="left:1754px;top:912px;width:2px;height:40px;background:#69696b"></div><div class="a" style="left:1838px;top:912px;width:2px;height:40px;background:#69696b"></div><svg style="left:1727px;top:919px" width="15" height="8" viewBox="0 0 15 8"><path d="M1 7 L7.5 1 L14 7" fill="none" stroke="#e0e0e0" stroke-width="1.600"/></svg><svg style="left:1727px;top:938px" width="15" height="8" viewBox="0 0 15 8"><path d="M1 1 L7.5 7 L14 1" fill="none" stroke="#e0e0e0" stroke-width="1.6"/></svg><div class="a" style="left:1762px;top:914px;width:76px;height:36px;overflow:hidden"><div class="t" style="left:0;top:6px;font-size:25px;color:#f0f0f0">100%</div></div><svg style="left:1849px;top:929px" width="15" height="8" viewBox="0 0 15 8"><path d="M1 1 L7.5 7 L14 1" fill="none" stroke="#e0e0e0" stroke-width="1.8"/></svg>
<svg style="left:1444px;top:864px" width="38" height="32" viewBox="0 0 38 32"><path d="M11 2 H36 V11 H33 V6 H26 V26 H30 V29 H17 V26 H21 V6 H14 V11 H11 Z" fill="#cfcfcf"/><path d="M1 15 H17 V20 H15 V18 H11 V27 H13 V29 H6 V27 H8 V18 H4 V20 H1 Z" fill="#cfcfcf"/></svg>
<svg style="left:1670px;top:864px" width="36" height="34" viewBox="0 0 36 34"><path d="M6 2 V24 M2 6 L6 1 L10 6 M2 20 L6 25 L10 20" fill="none" stroke="#cfcfcf" stroke-width="2.200"/><path d="M14 3 H34 M14 32 H34" stroke="#cfcfcf" stroke-width="1.500"/><text x="17" y="17" font-family="Liberation Sans" font-size="14" fill="#cfcfcf">A</text><text x="17" y="31" font-family="Liberation Sans" font-size="14" fill="#cfcfcf">A</text></svg>
<svg style="left:1444px;top:914px" width="38" height="34" viewBox="0 0 38 34"><path d="M6 3 V30" stroke="#cfcfcf" stroke-width="2.500"/><path d="M1 8 L6 2 L11 8 Z M1 25 L6 31 L11 25 Z" fill="#cfcfcf"/><path d="M14 3 H36 V12 H33 V7 H27 V27 H31 V30 H18 V27 H22 V7 H17 V12 H14 Z" fill="#cfcfcf"/></svg>
<svg style="left:1670px;top:912px" width="36" height="38" viewBox="0 0 36 38"><path d="M5 2 H31 V11 H28 V6 H20.500 V25 H25 V28 H11 V25 H15.500 V6 H8 V11 H5 Z" fill="#cfcfcf"/><path d="M3 33 H33" stroke="#cfcfcf" stroke-width="2"/><path d="M1 33 L7 28 V38 Z M35 33 L29 28 V38 Z" fill="#cfcfcf"/></svg>
<svg style="left:1855px;top:977px" width="30" height="10" viewBox="0 0 30 10"><circle cx="4.500" cy="5" r="4" fill="#d0d0d0"/><circle cx="14.500" cy="5" r="4" fill="#d0d0d0"/><circle cx="24.500" cy="5" r="4" fill="#d0d0d0"/></svg>
<div class="a" style="left:1426px;top:1008px;width:469px;height:2px;background:#4a4a4c"></div>
<div class="t" style="left:1446px;top:1032px;font-size:23px;color:#e8e8e8;">段落</div>
<div class="a" style="left:1447px;top:1075px;width:43px;height:43px;background:#2f2f31;border-radius:4px"></div>
<svg style="left:1454px;top:1078px" width="34" height="38" viewBox="0 1078 34 38"><rect x="0" y="1083" width="29" height="2.200" fill="#d8d8d8"/><rect x="0" y="1090" width="22" height="2.200" fill="#d8d8d8"/><rect x="0" y="1097" width="29" height="2.200" fill="#d8d8d8"/><rect x="0" y="1104" width="22" height="2.200" fill="#d8d8d8"/><rect x="0" y="1111" width="29" height="2.200" fill="#d8d8d8"/></svg>
<svg style="left:1501px;top:1078px" width="34" height="38" viewBox="0 1078 34 38"><rect x="0" y="1083" width="29" height="2.200" fill="#d8d8d8"/><rect x="4" y="1090" width="21" height="2.200" fill="#d8d8d8"/><rect x="0" y="1097" width="29" height="2.200" fill="#d8d8d8"/><rect x="4" y="1104" width="21" height="2.200" fill="#d8d8d8"/><rect x="0" y="1111" width="29" height="2.200" fill="#d8d8d8"/></svg>
<svg style="left:1548px;top:1078px" width="34" height="38" viewBox="0 1078 34 38"><rect x="0" y="1083" width="29" height="2.200" fill="#d8d8d8"/><rect x="7" y="1090" width="22" height="2.200" fill="#d8d8d8"/><rect x="0" y="1097" width="29" height="2.200" fill="#d8d8d8"/><rect x="7" y="1104" width="22" height="2.200" fill="#d8d8d8"/><rect x="0" y="1111" width="29" height="2.200" fill="#d8d8d8"/></svg>
<svg style="left:1610px;top:1078px" width="34" height="38" viewBox="0 1078 34 38"><rect x="0" y="1083" width="29" height="2.200" fill="#d8d8d8"/><rect x="0" y="1090" width="29" height="2.200" fill="#d8d8d8"/><rect x="0" y="1097" width="29" height="2.200" fill="#d8d8d8"/><rect x="0" y="1104" width="29" height="2.200" fill="#d8d8d8"/><rect x="0" y="1111" width="22" height="2.200" fill="#d8d8d8"/></svg>
<svg style="left:1657px;top:1078px" width="34" height="38" viewBox="0 1078 34 38"><rect x="0" y="1083" width="29" height="2.200" fill="#d8d8d8"/><rect x="0" y="1090" width="29" height="2.200" fill="#d8d8d8"/><rect x="0" y="1097" width="29" height="2.200" fill="#d8d8d8"/><rect x="0" y="1104" width="29" height="2.200" fill="#d8d8d8"/><rect x="4" y="1111" width="21" height="2.200" fill="#d8d8d8"/></svg>
<svg style="left:1704px;top:1078px" width="34" height="38" viewBox="0 1078 34 38"><rect x="0" y="1083" width="29" height="2.200" fill="#d8d8d8"/><rect x="0" y="1090" width="29" height="2.200" fill="#d8d8d8"/><rect x="0" y="1097" width="29" height="2.200" fill="#d8d8d8"/><rect x="0" y="1104" width="29" height="2.200" fill="#d8d8d8"/><rect x="7" y="1111" width="22" height="2.200" fill="#d8d8d8"/></svg>
<svg style="left:1751px;top:1078px" width="34" height="38" viewBox="0 1078 34 38"><rect x="0" y="1083" width="29" height="2.200" fill="#d8d8d8"/><rect x="0" y="1090" width="29" height="2.200" fill="#d8d8d8"/><rect x="0" y="1097" width="29" height="2.200" fill="#d8d8d8"/><rect x="0" y="1104" width="29" height="2.200" fill="#d8d8d8"/><rect x="0" y="1111" width="29" height="2.200" fill="#d8d8d8"/></svg>
<svg style="left:1813px;top:1078px" width="30" height="38" viewBox="0 1078 30 38"><rect x="4" y="1083" width="18" height="2.200" fill="#d8d8d8"/><rect x="9" y="1090" width="13" height="2.200" fill="#d8d8d8"/><rect x="0" y="1097" width="22" height="2.200" fill="#d8d8d8"/><rect x="9" y="1104" width="13" height="2.200" fill="#d8d8d8"/><rect x="4" y="1111" width="18" height="2.200" fill="#d8d8d8"/><rect x="25" y="1081" width="2" height="33" fill="#d8d8d8"/></svg>
<svg style="left:1860px;top:1078px" width="30" height="38" viewBox="0 1078 30 38"><rect x="4" y="1083" width="18" height="2.200" fill="#d8d8d8"/><rect x="4" y="1090" width="18" height="2.200" fill="#d8d8d8"/><rect x="0" y="1097" width="22" height="2.200" fill="#d8d8d8"/><rect x="4" y="1104" width="18" height="2.200" fill="#d8d8d8"/><rect x="4" y="1111" width="18" height="2.200" fill="#d8d8d8"/><rect x="25" y="1081" width="2" height="33" fill="#d8d8d8"/></svg>
<div class="a" style="left:1489px;top:1131px;width:154px;height:40px;background:#454547;border:2px solid #69696b;border-radius:5px"></div><div class="a" style="left:1528px;top:1131px;width:2px;height:40px;background:#69696b"></div><svg style="left:1501px;top:1138px" width="15" height="8" viewBox="0 0 15 8"><path d="M1 7 L7.5 1 L14 7" fill="none" stroke="#e0e0e0" stroke-width="1.600"/></svg><svg style="left:1501px;top:1157px" width="15" height="8" viewBox="0 0 15 8"><path d="M1 1 L7.5 7 L14 1" fill="none" stroke="#e0e0e0" stroke-width="1.6"/></svg><div class="a" style="left:1536px;top:1133px;width:103px;height:36px;overflow:hidden"><div class="t" style="left:0;top:6px;font-size:25px;color:#f0f0f0">0 英寸</div></div>
<div class="a" style="left:1724px;top:1131px;width:150px;height:40px;background:#454547;border:2px solid #69696b;border-radius:5px"></div><div class="a" style="left:1762px;top:1131px;width:2px;height:40px;background:#69696b"></div><svg style="left:1736px;top:1138px" width="15" height="8" viewBox="0 0 15 8"><path d="M1 7 L7.5 1 L14 7" fill="none" stroke="#e0e0e0" stroke-width="1.600"/></svg><svg style="left:1736px;top:1157px" width="15" height="8" viewBox="0 0 15 8"><path d="M1 1 L7.5 7 L14 1" fill="none" stroke="#e0e0e0" stroke-width="1.6"/></svg><div class="a" style="left:1771px;top:1133px;width:99px;height:36px;overflow:hidden"><div class="t" style="left:0;top:6px;font-size:25px;color:#f0f0f0">0 英寸</div></div>
<div class="a" style="left:1489px;top:1183px;width:154px;height:40px;background:#454547;border:2px solid #69696b;border-radius:5px"></div><div class="a" style="left:1528px;top:1183px;width:2px;height:40px;background:#69696b"></div><svg style="left:1501px;top:1190px" width="15" height="8" viewBox="0 0 15 8"><path d="M1 7 L7.5 1 L14 7" fill="none" stroke="#e0e0e0" stroke-width="1.600"/></svg><svg style="left:1501px;top:1209px" width="15" height="8" viewBox="0 0 15 8"><path d="M1 1 L7.5 7 L14 1" fill="none" stroke="#e0e0e0" stroke-width="1.6"/></svg><div class="a" style="left:1536px;top:1185px;width:103px;height:36px;overflow:hidden"><div class="t" style="left:0;top:6px;font-size:25px;color:#f0f0f0">0 英寸</div></div>
<div class="a" style="left:1724px;top:1183px;width:150px;height:40px;background:#454547;border:2px solid #69696b;border-radius:5px"></div><div class="a" style="left:1762px;top:1183px;width:2px;height:40px;background:#69696b"></div><svg style="left:1736px;top:1190px" width="15" height="8" viewBox="0 0 15 8"><path d="M1 7 L7.5 1 L14 7" fill="none" stroke="#e0e0e0" stroke-width="1.600"/></svg><svg style="left:1736px;top:1209px" width="15" height="8" viewBox="0 0 15 8"><path d="M1 1 L7.5 7 L14 1" fill="none" stroke="#e0e0e0" stroke-width="1.6"/></svg><div class="a" style="left:1771px;top:1185px;width:99px;height:36px;overflow:hidden"><div class="t" style="left:0;top:6px;font-size:25px;color:#f0f0f0">0 英寸</div></div>
<div class="a" style="left:1489px;top:1236px;width:154px;height:40px;background:#454547;border:2px solid #69696b;border-radius:5px"></div><div class="a" style="left:1528px;top:1236px;width:2px;height:40px;background:#69696b"></div><div class="a" style="left:1608px;top:1236px;width:2px;height:40px;background:#69696b"></div><svg style="left:1501px;top:1243px" width="15" height="8" viewBox="0 0 15 8"><path d="M1 7 L7.5 1 L14 7" fill="none" stroke="#e0e0e0" stroke-width="1.600"/></svg><svg style="left:1501px;top:1262px" width="15" height="8" viewBox="0 0 15 8"><path d="M1 1 L7.5 7 L14 1" fill="none" stroke="#e0e0e0" stroke-width="1.6"/></svg><div class="a" style="left:1536px;top:1238px;width:72px;height:36px;overflow:hidden"><div class="t" style="left:0;top:6px;font-size:25px;color:#f0f0f0">自动</div></div><svg style="left:1618px;top:1253px" width="15" height="8" viewBox="0 0 15 8"><path d="M1 1 L7.5 7 L14 1" fill="none" stroke="#e0e0e0" stroke-width="1.8"/></svg>
<div class="t" style="left:1655px;top:1243px;font-size:24px;color:#e8e8e8;">行</div>
<div class="a" style="left:1489px;top:1287px;width:154px;height:40px;background:#454547;border:2px solid #69696b;border-radius:5px"></div><div class="a" style="left:1528px;top:1287px;width:2px;height:40px;background:#69696b"></div><svg style="left:1501px;top:1294px" width="15" height="8" viewBox="0 0 15 8"><path d="M1 7 L7.5 1 L14 7" fill="none" stroke="#e0e0e0" stroke-width="1.600"/></svg><svg style="left:1501px;top:1313px" width="15" height="8" viewBox="0 0 15 8"><path d="M1 1 L7.5 7 L14 1" fill="none" stroke="#e0e0e0" stroke-width="1.6"/></svg><div class="a" style="left:1536px;top:1289px;width:103px;height:36px;overflow:hidden"><div class="t" style="left:0;top:6px;font-size:25px;color:#f0f0f0">0 英寸</div></div>
<div class="a" style="left:1724px;top:1287px;width:150px;height:40px;background:#454547;border:2px solid #69696b;border-radius:5px"></div><div class="a" style="left:1762px;top:1287px;width:2px;height:40px;background:#69696b"></div><svg style="left:1736px;top:1294px" width="15" height="8" viewBox="0 0 15 8"><path d="M1 7 L7.5 1 L14 7" fill="none" stroke="#e0e0e0" stroke-width="1.600"/></svg><svg style="left:1736px;top:1313px" width="15" height="8" viewBox="0 0 15 8"><path d="M1 1 L7.5 7 L14 1" fill="none" stroke="#e0e0e0" stroke-width="1.6"/></svg><div class="a" style="left:1771px;top:1289px;width:99px;height:36px;overflow:hidden"><div class="t" style="left:0;top:6px;font-size:25px;color:#f0f0f0">0 英寸</div></div>
<div class="a" style="left:1489px;top:1338px;width:154px;height:40px;background:#454547;border:2px solid #69696b;border-radius:5px"></div><div class="a" style="left:1490px;top:1339px;width:38px;height:38px;background:#59595b;border-radius:4px 0 0 4px"></div><div class="a" style="left:1528px;top:1338px;width:2px;height:40px;background:#69696b"></div><div class="a" style="left:1608px;top:1338px;width:2px;height:40px;background:#69696b"></div><svg style="left:1501px;top:1345px" width="15" height="8" viewBox="0 0 15 8"><path d="M1 7 L7.5 1 L14 7" fill="none" stroke="#8c8c8e" stroke-width="1.600"/></svg><svg style="left:1501px;top:1364px" width="15" height="8" viewBox="0 0 15 8"><path d="M1 1 L7.5 7 L14 1" fill="none" stroke="#8c8c8e" stroke-width="1.6"/></svg><div class="a" style="left:1536px;top:1340px;width:72px;height:36px;overflow:hidden"><div class="t" style="left:0;top:6px;font-size:25px;color:#f0f0f0">忽略</div></div><svg style="left:1618px;top:1355px" width="15" height="8" viewBox="0 0 15 8"><path d="M1 1 L7.5 7 L14 1" fill="none" stroke="#e0e0e0" stroke-width="1.8"/></svg>
<div class="a" style="left:1489px;top:1389px;width:154px;height:40px;background:#454547;border:2px solid #69696b;border-radius:5px"></div><div class="a" style="left:1528px;top:1389px;width:2px;height:40px;background:#69696b"></div><svg style="left:1501px;top:1396px" width="15" height="8" viewBox="0 0 15 8"><path d="M1 7 L7.5 1 L14 7" fill="none" stroke="#e0e0e0" stroke-width="1.600"/></svg><svg style="left:1501px;top:1415px" width="15" height="8" viewBox="0 0 15 8"><path d="M1 1 L7.5 7 L14 1" fill="none" stroke="#e0e0e0" stroke-width="1.6"/></svg><div class="a" style="left:1536px;top:1391px;width:103px;height:36px;overflow:hidden"><div class="t" style="left:0;top:6px;font-size:25px;color:#f0f0f0">0</div></div>
<div class="a" style="left:1724px;top:1389px;width:150px;height:40px;background:#454547;border:2px solid #69696b;border-radius:5px"></div><div class="a" style="left:1762px;top:1389px;width:2px;height:40px;background:#69696b"></div><svg style="left:1736px;top:1396px" width="15" height="8" viewBox="0 0 15 8"><path d="M1 7 L7.5 1 L14 7" fill="none" stroke="#e0e0e0" stroke-width="1.600"/></svg><svg style="left:1736px;top:1415px" width="15" height="8" viewBox="0 0 15 8"><path d="M1 1 L7.5 7 L14 1" fill="none" stroke="#e0e0e0" stroke-width="1.6"/></svg><div class="a" style="left:1771px;top:1391px;width:99px;height:36px;overflow:hidden"><div class="t" style="left:0;top:6px;font-size:25px;color:#f0f0f0">0</div></div>
<svg style="left:1446px;top:1135px" width="36" height="32" viewBox="0 0 36 32"><path d="M1 16 H9" stroke="#cfcfcf" stroke-width="2"/><path d="M8 12 L13 16 L8 20 Z" fill="#cfcfcf"/><rect x="15" y="3" width="2" height="27" fill="#cfcfcf"/><rect x="20" y="4" width="12" height="2" fill="#cfcfcf"/><rect x="20" y="10" width="12" height="2" fill="#cfcfcf"/><rect x="20" y="16" width="12" height="2" fill="#cfcfcf"/><rect x="20" y="22" width="12" height="2" fill="#cfcfcf"/><rect x="20" y="28" width="12" height="2" fill="#cfcfcf"/></svg>
<svg style="left:1680px;top:1135px" width="36" height="32" viewBox="0 0 36 32"><rect x="1" y="4" width="12" height="2" fill="#cfcfcf"/><rect x="1" y="10" width="12" height="2" fill="#cfcfcf"/><rect x="1" y="16" width="12" height="2" fill="#cfcfcf"/><rect x="1" y="22" width="12" height="2" fill="#cfcfcf"/><rect x="1" y="28" width="12" height="2" fill="#cfcfcf"/><rect x="16" y="3" width="2" height="27" fill="#cfcfcf"/><path d="M26 16 H34" stroke="#cfcfcf" stroke-width="2"/><path d="M26 12 L20 16 L26 20 Z" fill="#cfcfcf"/></svg>
<svg style="left:1446px;top:1185px" width="36" height="34" viewBox="0 0 36 34"><path d="M1 4 H10" stroke="#cfcfcf" stroke-width="2"/><path d="M9 0 L14 4 L9 8 Z" fill="#cfcfcf"/><rect x="20" y="7" width="12" height="2" fill="#cfcfcf"/><rect x="16" y="13" width="16" height="2" fill="#cfcfcf"/><rect x="16" y="19" width="16" height="2" fill="#cfcfcf"/><rect x="16" y="25" width="16" height="2" fill="#cfcfcf"/><rect x="16" y="31" width="16" height="2" fill="#cfcfcf"/></svg>
<svg style="left:1680px;top:1185px" width="36" height="36" viewBox="0 0 36 36"><rect x="1" y="4" width="16" height="2" fill="#cfcfcf"/><rect x="1" y="10" width="16" height="2" fill="#cfcfcf"/><rect x="1" y="16" width="16" height="2" fill="#cfcfcf"/><rect x="1" y="22" width="16" height="2" fill="#cfcfcf"/><rect x="1" y="28" width="10" height="2" fill="#cfcfcf"/><path d="M25 29 H34" stroke="#cfcfcf" stroke-width="2"/><path d="M25 25 L20 29 L25 33 Z" fill="#cfcfcf"/></svg>
<svg style="left:1445px;top:1238px" width="38" height="36" viewBox="0 0 38 36"><path d="M5 3 V33" stroke="#cfcfcf" stroke-width="2"/><path d="M1 7 L5 1 L9 7 Z M1 29 L5 35 L9 29 Z" fill="#cfcfcf"/><path d="M12 3 H36 M12 18 H36 M12 33 H36" stroke="#cfcfcf" stroke-width="2"/><rect x="13" y="7" width="6.500" height="8" fill="none" stroke="#cfcfcf" stroke-width="1.800"/><rect x="22" y="7" width="6.500" height="8" fill="none" stroke="#cfcfcf" stroke-width="1.800"/><rect x="31" y="7" width="5" height="8" fill="none" stroke="#cfcfcf" stroke-width="1.800"/><rect x="13" y="22" width="6.500" height="8" fill="none" stroke="#cfcfcf" stroke-width="1.800"/><rect x="22" y="22" width="6.500" height="8" fill="none" stroke="#cfcfcf" stroke-width="1.800"/><rect x="31" y="22" width="5" height="8" fill="none" stroke="#cfcfcf" stroke-width="1.800"/></svg>
<svg style="left:1446px;top:1290px" width="36" height="34" viewBox="0 0 36 34"><path d="M1 4 H10" stroke="#cfcfcf" stroke-width="2"/><path d="M9 0 L14 4 L9 8 Z" fill="#cfcfcf"/><rect x="17" y="2" width="15" height="9" fill="none" stroke="#cfcfcf" stroke-width="2"/><rect x="16" y="19" width="16" height="2" fill="#cfcfcf"/><rect x="16" y="25" width="16" height="2" fill="#cfcfcf"/><rect x="16" y="31" width="16" height="2" fill="#cfcfcf"/></svg>
<svg style="left:1680px;top:1290px" width="36" height="34" viewBox="0 0 36 34"><rect x="16" y="2" width="16" height="2" fill="#cfcfcf"/><rect x="16" y="8" width="16" height="2" fill="#cfcfcf"/><rect x="16" y="14" width="16" height="2" fill="#cfcfcf"/><rect x="17" y="20" width="15" height="11" fill="none" stroke="#cfcfcf" stroke-width="2"/><path d="M1 27 H10" stroke="#cfcfcf" stroke-width="2"/><path d="M9 23 L14 27 L9 31 Z" fill="#cfcfcf"/></svg>
<svg style="left:1446px;top:1340px" width="36" height="34" viewBox="0 0 36 34"><rect x="16" y="2" width="16" height="2" fill="#cfcfcf"/><rect x="17" y="10" width="15" height="11" fill="none" stroke="#cfcfcf" stroke-width="2"/><rect x="16" y="29" width="16" height="2" fill="#cfcfcf"/><path d="M1 16 H10" stroke="#cfcfcf" stroke-width="2"/><path d="M9 12 L14 16 L9 20 Z" fill="#cfcfcf"/></svg>
<svg style="left:1446px;top:1392px" width="36" height="34" viewBox="0 0 36 34"><path d="M4 2 V16" stroke="#cfcfcf" stroke-width="2"/><path d="M1 5 L4 0 L7 5 Z M1 13 L4 18 L7 13 Z" fill="#cfcfcf"/><text x="9" y="17" font-family="Liberation Sans" font-size="17" fill="#cfcfcf">A</text><rect x="23" y="4" width="9" height="2" fill="#cfcfcf"/><rect x="23" y="10" width="9" height="2" fill="#cfcfcf"/><rect x="23" y="16" width="9" height="2" fill="#cfcfcf"/><rect x="8" y="22" width="24" height="2" fill="#cfcfcf"/><rect x="8" y="28" width="24" height="2" fill="#cfcfcf"/></svg>
<svg style="left:1680px;top:1392px" width="36" height="34" viewBox="0 0 36 34"><text x="1" y="17" font-family="Liberation Sans" font-size="17" fill="#cfcfcf">A+</text><rect x="23" y="4" width="9" height="2" fill="#cfcfcf"/><rect x="23" y="10" width="9" height="2" fill="#cfcfcf"/><rect x="23" y="16" width="9" height="2" fill="#cfcfcf"/><rect x="1" y="22" width="31" height="2" fill="#cfcfcf"/><rect x="1" y="28" width="31" height="2" fill="#cfcfcf"/></svg>
<div class="a" style="left:1447px;top:1457px;width:23px;height:23px;border:2px solid #d0d0d0;border-radius:3px"></div>
<div class="t" style="left:1482px;top:1455px;font-size:23px;color:#e8e8e8;">底纹</div>
<svg style="left:1681px;top:1452px" width="32" height="32" viewBox="0 0 32 32"><rect x="0" y="0" width="32" height="32" fill="#d8d8d8"/><g fill="#6a6a6c"><rect x="2" y="2" width="8" height="8"/><rect x="12" y="2" width="8" height="8"/><rect x="22" y="12" width="8" height="8"/><rect x="2" y="12" width="8" height="8"/><rect x="12" y="22" width="8" height="8"/></g><g fill="#a0a0a2"><rect x="22" y="2" width="8" height="8"/><rect x="12" y="12" width="8" height="8"/><rect x="2" y="22" width="8" height="8"/><rect x="22" y="22" width="8" height="8"/></g></svg>
<div class="a" style="left:1724px;top:1450px;width:151px;height:36px;background:#59595b;border-radius:4px"></div>
<div class="a" style="left:1724px;top:1450px;width:114px;height:36px;background:#e6e6e6"></div>
<div class="a" style="left:1731px;top:1457px;width:24px;height:23px;background:#3a9cc6;border:2px solid #2a2a2a"></div>
<div class="t" style="left:1763px;top:1453px;font-size:27px;color:#858585;-webkit-text-stroke:0">C=1...</div>
<svg style="left:1849px;top:1463px" width="15" height="8" viewBox="0 0 15 8"><path d="M1 1 L7.5 7 L14 1" fill="none" stroke="#b8b8b8" stroke-width="1.8"/></svg>
<div class="a" style="left:1447px;top:1507px;width:23px;height:23px;border:2px solid #d0d0d0;border-radius:3px"></div>
<div class="t" style="left:1482px;top:1502px;font-size:23px;color:#e8e8e8;">边框</div>
<svg style="left:1681px;top:1501px" width="32" height="20" viewBox="0 0 32 20"><path d="M1.500 20 V6 a4 4 0 0 1 4 -4 H32 M8.500 20 V13 a3 3 0 0 1 3 -3 H32" fill="none" stroke="#d0d0d0" stroke-width="2.500"/></svg>
<div class="a" style="left:1724px;top:1500px;width:151px;height:36px;background:#59595b;border-radius:4px"></div>
<div class="a" style="left:1724px;top:1500px;width:114px;height:36px;background:#e6e6e6"></div>
<div class="a" style="left:1731px;top:1505px;width:24px;height:23px;background:#3a3a3c;border:2px solid #1a1a1a"></div>
<div class="t" style="left:1762px;top:1503px;font-size:26px;color:#858585;-webkit-text-stroke:0">[黑色]</div>
<svg style="left:1849px;top:1512px" width="15" height="8" viewBox="0 0 15 8"><path d="M1 1 L7.5 7 L14 1" fill="none" stroke="#b8b8b8" stroke-width="1.8"/></svg>
<div class="a" style="left:1426px;top:1517px;width:492px;height:2px;background:#38383a"></div>
</body></html>
